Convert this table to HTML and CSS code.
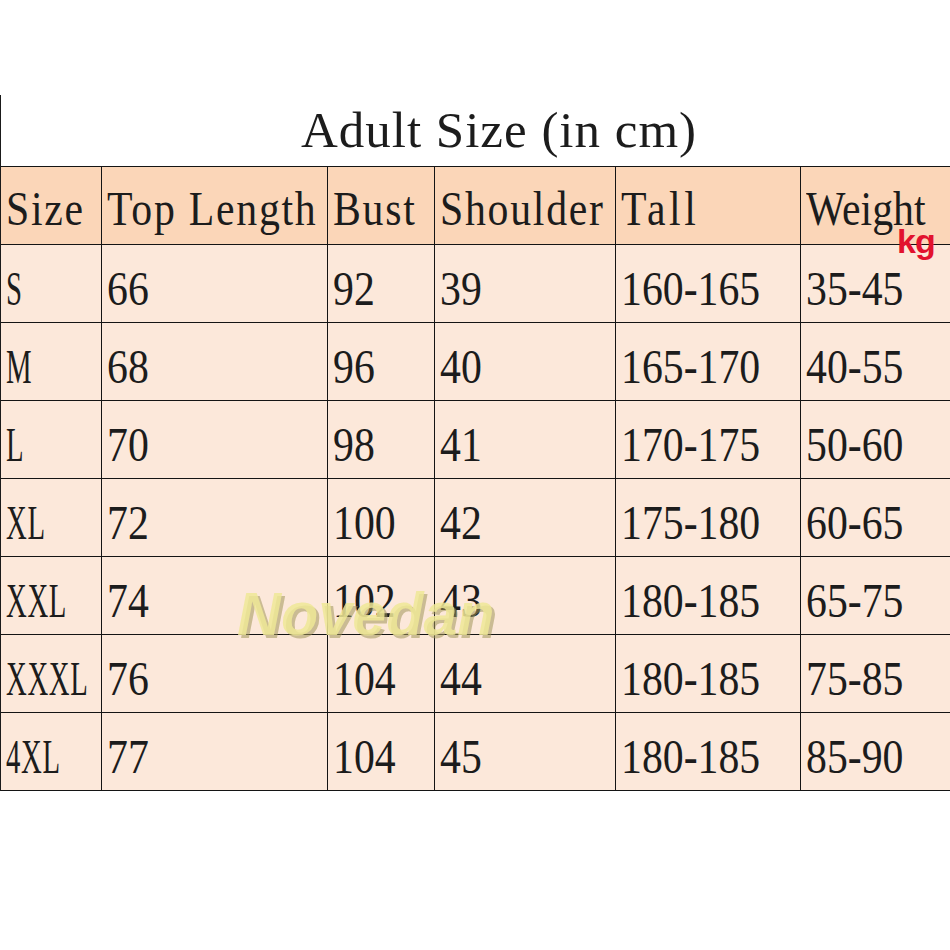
FILE: index.html
```html
<!DOCTYPE html>
<html>
<head>
<meta charset="utf-8">
<link rel="stylesheet" href="styles.css">
</head>
<body>
<div class="sheet">
  <div class="title"><span class="title-text">Adult Size (in cm)</span></div>
  <div class="grid">
    <div class="cell head"><span class="t">Size</span></div>
    <div class="cell head"><span class="t">Top Length</span></div>
    <div class="cell head"><span class="t">Bust</span></div>
    <div class="cell head"><span class="t">Shoulder</span></div>
    <div class="cell head"><span class="t wide">Tall</span></div>
    <div class="cell head weight"><span class="t">Weight</span><span class="kg">kg</span></div>

    <div class="cell"><span class="t lbl">S</span></div>
    <div class="cell"><span class="t">66</span></div>
    <div class="cell"><span class="t">92</span></div>
    <div class="cell"><span class="t">39</span></div>
    <div class="cell"><span class="t">160-165</span></div>
    <div class="cell"><span class="t">35-45</span></div>

    <div class="cell"><span class="t lbl">M</span></div>
    <div class="cell"><span class="t">68</span></div>
    <div class="cell"><span class="t">96</span></div>
    <div class="cell"><span class="t">40</span></div>
    <div class="cell"><span class="t">165-170</span></div>
    <div class="cell"><span class="t">40-55</span></div>

    <div class="cell"><span class="t lbl">L</span></div>
    <div class="cell"><span class="t">70</span></div>
    <div class="cell"><span class="t">98</span></div>
    <div class="cell"><span class="t">41</span></div>
    <div class="cell"><span class="t">170-175</span></div>
    <div class="cell"><span class="t">50-60</span></div>

    <div class="cell"><span class="t lbl">XL</span></div>
    <div class="cell"><span class="t">72</span></div>
    <div class="cell"><span class="t">100</span></div>
    <div class="cell"><span class="t">42</span></div>
    <div class="cell"><span class="t">175-180</span></div>
    <div class="cell"><span class="t">60-65</span></div>

    <div class="cell"><span class="t lbl">XXL</span></div>
    <div class="cell"><span class="t">74</span></div>
    <div class="cell"><span class="t">102</span></div>
    <div class="cell"><span class="t">43</span></div>
    <div class="cell"><span class="t">180-185</span></div>
    <div class="cell"><span class="t">65-75</span></div>

    <div class="cell"><span class="t lbl">XXXL</span></div>
    <div class="cell"><span class="t">76</span></div>
    <div class="cell"><span class="t">104</span></div>
    <div class="cell"><span class="t">44</span></div>
    <div class="cell"><span class="t">180-185</span></div>
    <div class="cell"><span class="t">75-85</span></div>

    <div class="cell"><span class="t lbl">4XL</span></div>
    <div class="cell"><span class="t">77</span></div>
    <div class="cell"><span class="t">104</span></div>
    <div class="cell"><span class="t">45</span></div>
    <div class="cell"><span class="t">180-185</span></div>
    <div class="cell"><span class="t">85-90</span></div>
  </div>
  <div class="watermark">Novedan</div>
</div>
</body>
</html>
```
FILE: styles.css
```css
html, body {
  margin: 0;
  padding: 0;
  background: #ffffff;
}
body {
  width: 950px;
  height: 950px;
  overflow: hidden;
  font-family: "Liberation Serif", "DejaVu Serif", serif;
  color: #1c1c1c;
}
.sheet {
  position: relative;
  margin-top: 95px;
  border-left: 1px solid #1a1a1a;
}
.title {
  height: 71px;
  display: flex;
  align-items: center;
  justify-content: center;
  padding-left: 47px;
  box-sizing: border-box;
  font-size: 51px;
  line-height: 1;
}
.title-text {
  display: inline-block;
  white-space: nowrap;
  letter-spacing: 1px;
}
.grid {
  display: grid;
  grid-template-columns: 100px 225px 106px 180px 184px minmax(0, 1fr);
  grid-auto-rows: 77px;
  gap: 1px;
  padding: 1px 0;
  background: #141414;
}
.cell {
  background: #fce8da;
  display: flex;
  align-items: center;
  min-width: 0;
  padding: 10px 0 0 5px;
  box-sizing: border-box;
  font-size: 48px;
  white-space: nowrap;
}
.cell.head {
  background: #fbd6b8;
  padding-top: 6px;
}
.t {
  display: inline-block;
  transform: scaleX(0.87);
  transform-origin: left center;
}
.head .t {
  letter-spacing: 2px;
}
.head .t.wide {
  letter-spacing: 4px;
}
.weight .t {
  letter-spacing: 0;
}
.t.lbl {
  transform: scaleX(0.6);
  letter-spacing: 1px;
}
.weight {
  position: relative;
}
.kg {
  position: absolute;
  left: 96px;
  top: 57px;
  font-family: "Liberation Sans", Arial, sans-serif;
  font-weight: bold;
  font-size: 34px;
  line-height: 1;
  color: #e2122e;
  letter-spacing: -1px;
  z-index: 2;
}
.watermark {
  position: absolute;
  left: 236px;
  top: 489px;
  font-family: "Liberation Sans", Arial, sans-serif;
  font-weight: bold;
  font-style: italic;
  font-size: 61px;
  line-height: 1;
  color: rgba(238, 232, 150, 0.85);
  text-shadow: 3px 3px 0 rgba(160, 150, 90, 0.55);
  pointer-events: none;
}
```
